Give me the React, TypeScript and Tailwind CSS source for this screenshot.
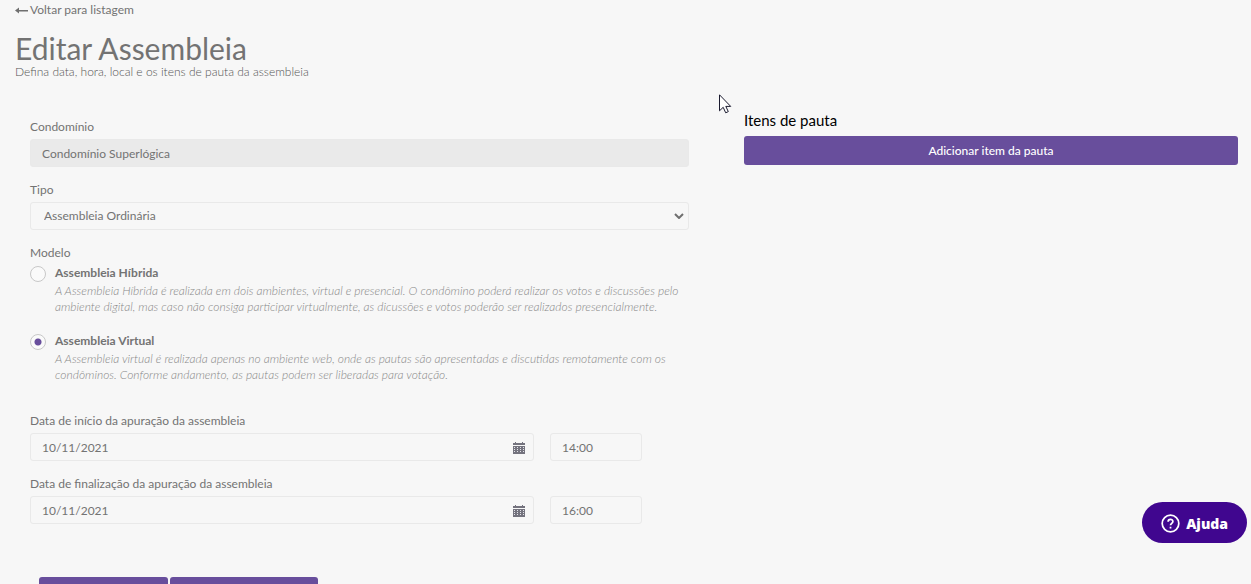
import { useState, type ReactNode } from "react";

const fieldClass =
  "block h-7 w-full rounded-[3px] border border-[#e9e9e9] bg-transparent px-[11px] text-[12px] text-[#737373] outline-none";

function BackArrow() {
  return (
    <svg width="13" height="9" viewBox="0 0 13 9" aria-hidden="true">
      <path d="M0 4.500 4 1.500V4h9v1.500H4v2z" fill="#6f6f6f" />
    </svg>
  );
}

function CalendarIcon() {
  const columns = [1, 4, 7, 10];
  const rows = [5, 7, 9];
  return (
    <svg width="12" height="12" viewBox="0 0 12 12" aria-hidden="true" shapeRendering="crispEdges">
      <path d="M0 1h2V0h1v1h6V0h1v1h2v2H0zM0 4h12v8H0z" fill="#74737e" />
      {rows.map((y) => columns.map((x) => <rect key={`${x}-${y}`} x={x} y={y} width="1" height="1" fill="#e4e4ea" />))}
    </svg>
  );
}

function Field({ id, label, children }: { id: string; label: string; children: ReactNode }) {
  return (
    <div>
      <label htmlFor={id} className="block h-[22px] leading-5">
        {label}
      </label>
      {children}
    </div>
  );
}

type ModelOptionProps = {
  id: string;
  title: string;
  text: string;
  checked: boolean;
  onSelect: () => void;
};

function ModelOption({ id, title, text, checked, onSelect }: ModelOptionProps) {
  return (
    <div className="flex gap-[9px]">
      <input
        id={id}
        type="radio"
        name="modelo"
        checked={checked}
        onChange={onSelect}
        aria-describedby={`${id}-texto`}
        className="mt-[3px] size-4 shrink-0 appearance-none rounded-full border border-[#c8c8c8] bg-[#fafafa] bg-center bg-no-repeat checked:bg-[radial-gradient(circle,#684e9c_3px,transparent_4px)]"
      />
      <div>
        <label htmlFor={id} className="block leading-5 font-bold">
          {title}
        </label>
        <p id={`${id}-texto`} className="leading-4 font-light text-[#888888] italic">
          {text}
        </p>
      </div>
    </div>
  );
}

function DateRow({ id, label, date, time }: { id: string; label: string; date: string; time: string }) {
  return (
    <Field id={id} label={label}>
      <div className="grid grid-cols-[504fr_92fr_31fr] gap-4">
        <div className="relative">
          <input id={id} type="text" defaultValue={date} className={fieldClass} />
          <button type="button" aria-label="Abrir calendário" className="absolute top-[9px] right-[9px]">
            <CalendarIcon />
          </button>
        </div>
        <input type="text" defaultValue={time} aria-label={`${label}, hora`} className={fieldClass} />
      </div>
    </Field>
  );
}

export default function App() {
  const [model, setModel] = useState("virtual");

  return (
    <main className="h-screen overflow-hidden bg-[#f7f7f7] font-['Lato',sans-serif] text-[12px] text-[#737373]">
      <header className="px-[15px]">
        <a href="#listagem" className="flex items-center gap-[2px] leading-5">
          <BackArrow />
          Voltar para listagem
        </a>
        <h1 className="mt-3 text-[30px] leading-8">Editar Assembleia</h1>
        <p className="leading-4 font-light text-[#555555]">
          Defina data, hora, local e os itens de pauta da assembleia
        </p>
      </header>

      <div className="mt-7 grid grid-cols-[659fr_494fr] gap-[55px] pr-[13px] pl-[30px]">
        <form className="pt-[9px]" onSubmit={(e) => e.preventDefault()}>
          <div className="flex flex-col gap-[13px]">
            <Field id="condominio" label="Condomínio">
              <input
                id="condominio"
                type="text"
                disabled
                defaultValue="Condomínio Superlógica"
                className="block h-7 w-full rounded-[3px] border border-[#e9e9e9] bg-[#eaeaea] px-[11px] text-[12px] text-[#737373]"
              />
            </Field>
            <Field id="tipo" label="Tipo">
              <div className="relative">
                <select
                  id="tipo"
                  className="block h-7 w-full appearance-none rounded-[3px] border border-[#e9e9e9] bg-transparent px-[13px] text-[12px] text-[#737373] outline-none"
                >
                  <option>Assembleia Ordinária</option>
                </select>
                <svg
                  width="10"
                  height="6"
                  viewBox="0 0 10 6"
                  aria-hidden="true"
                  className="pointer-events-none absolute top-[11px] right-[5px]"
                >
                  <path d="M1 1l4 4 4-4" fill="none" stroke="#6f6f6f" strokeWidth="2" />
                </svg>
              </div>
            </Field>
            <fieldset>
              <legend className="h-5 leading-5">Modelo</legend>
              <div className="flex flex-col gap-4">
                <ModelOption
                  id="hibrida"
                  title="Assembleia Híbrida"
                  text="A Assembleia Híbrida é realizada em dois ambientes, virtual e presencial. O condômino poderá realizar os votos e discussões pelo ambiente digital, mas caso não consiga participar virtualmente, as dicussões e votos poderão ser realizados presencialmente."
                  checked={model === "hibrida"}
                  onSelect={() => setModel("hibrida")}
                />
                <ModelOption
                  id="virtual"
                  title="Assembleia Virtual"
                  text="A Assembleia virtual é realizada apenas no ambiente web, onde as pautas são apresentadas e discutidas remotamente com os condôminos. Conforme andamento, as pautas podem ser liberadas para votação."
                  checked={model === "virtual"}
                  onSelect={() => setModel("virtual")}
                />
              </div>
            </fieldset>
          </div>

          <div className="mt-7 flex flex-col gap-[13px]">
            <DateRow id="inicio" label="Data de início da apuração da assembleia" date="10/11/2021" time="14:00" />
            <DateRow id="fim" label="Data de finalização da apuração da assembleia" date="10/11/2021" time="16:00" />
          </div>

          <div className="mt-[53px] flex gap-[2px] pl-[9px]">
            <button type="submit" aria-label="Salvar" className="h-[29px] w-[129px] rounded-[3px] bg-[#684e9c]" />
            <button type="button" aria-label="Continuar" className="h-[29px] w-[148px] rounded-[3px] bg-[#684e9c]" />
          </div>
        </form>

        <section>
          <h2 className="text-[15px] leading-6 text-black">Itens de pauta</h2>
          <button
            type="button"
            className="mt-1 block h-[29px] w-full rounded-[3px] bg-[#684e9c] text-[12px] font-medium text-white"
          >
            Adicionar item da pauta
          </button>
        </section>
      </div>

      <button
        type="button"
        className="fixed right-1 bottom-[41px] flex h-[41px] items-center gap-[6px] rounded-full bg-[#40068f] px-[19px] pt-px font-['Open_Sans',sans-serif] text-[14px] font-extrabold text-white"
      >
        <svg width="19" height="19" viewBox="0 0 24 24" fill="none" stroke="currentColor" strokeWidth="2.2" aria-hidden="true">
          <circle cx="12" cy="12" r="10.5" />
          <path d="M9 9.800c0-4 6-4 6-.3 0 2.300-3 2.300-3 4.700M12 16v2.200" />
        </svg>
        Ajuda
      </button>

      <svg
        width="13"
        height="20"
        viewBox="0 0 13 20"
        aria-hidden="true"
        className="pointer-events-none fixed top-[94px] left-[719px]"
      >
        <path
          d="M.5.8v16l3.700-3.500 2.500 5.500 2.600-1.200-2.500-5.200h4.900z"
          fill="#ffffff"
          stroke="#1a1a2e"
          strokeWidth="1"
        />
      </svg>
    </main>
  );
}
